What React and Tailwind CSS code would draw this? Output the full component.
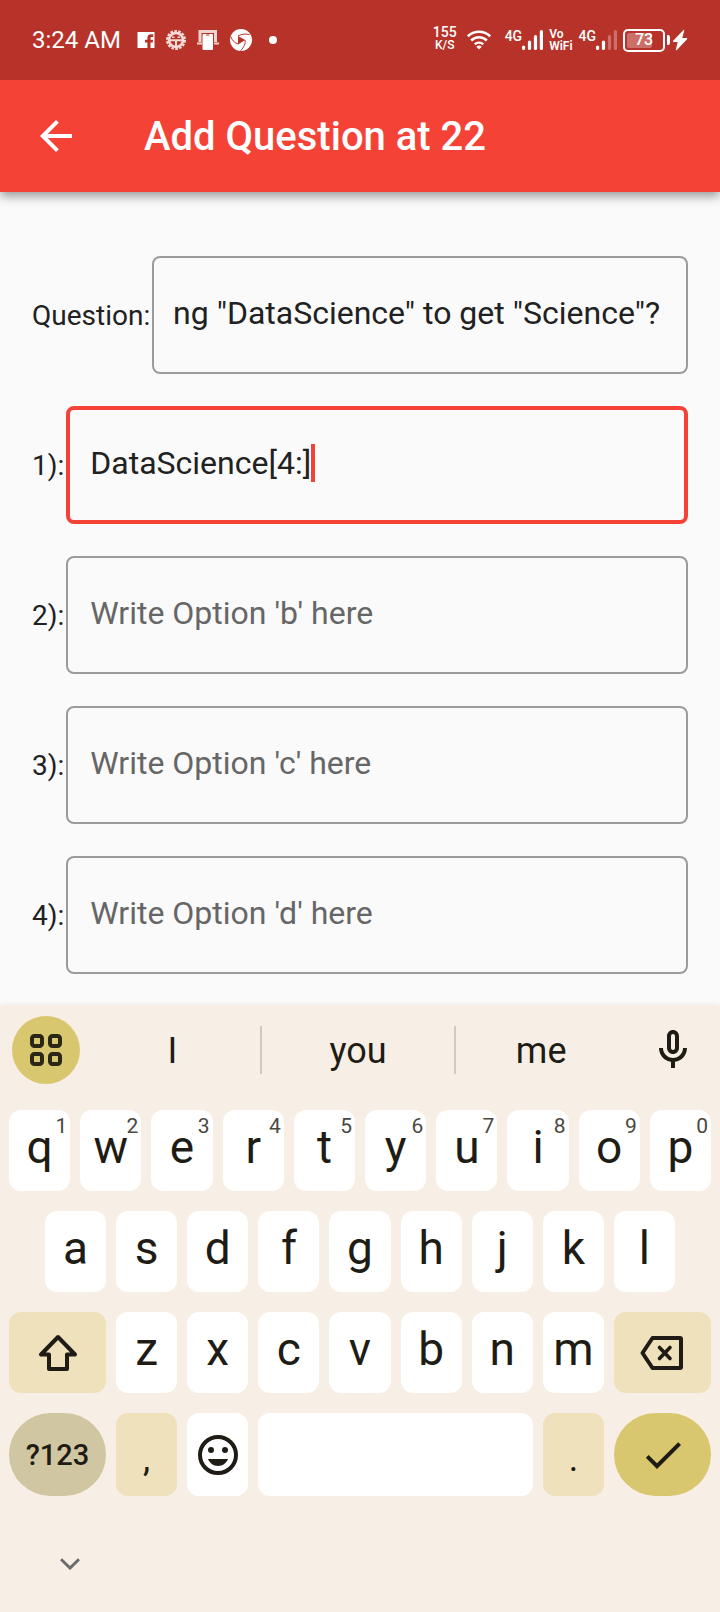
import React from "react";

const OPTIONS = [
  { id: "option-b", label: "2):", placeholder: "Write Option 'b' here" },
  { id: "option-c", label: "3):", placeholder: "Write Option 'c' here" },
  { id: "option-d", label: "4):", placeholder: "Write Option 'd' here" },
];

const TOP_ROW = ["q", "w", "e", "r", "t", "y", "u", "i", "o", "p"];
const HINTS = ["1", "2", "3", "4", "5", "6", "7", "8", "9", "0"];
const HOME_ROW = ["a", "s", "d", "f", "g", "h", "j", "k", "l"];
const LOWER_ROW = ["z", "x", "c", "v", "b", "n", "m"];

function FacebookIcon() {
  return (
    <svg viewBox="0 0 18 16" className="h-4 w-[18px]" fill="#fff" aria-hidden="true">
      <path
        fillRule="evenodd"
        d="M.5 0h17v16h-4v-5.500h2.200l.4-2.700h-2.600V6.200c0-.8.4-1.300 1.400-1.300h1.300V2.300h-2.200c-2.300 0-3.600 1.200-3.600 3.400v2.100H8v2.700h2.400V16H.5z"
      />
    </svg>
  );
}

function GearIcon() {
  return (
    <svg viewBox="0 0 20 20" className="size-5" fill="none" stroke="#f6dcd9" aria-hidden="true">
      <circle cx="10" cy="10" r="7" strokeWidth="2.600" />
      <circle cx="10" cy="10" r="8.900" strokeWidth="2.200" strokeDasharray="2.660 1.334" />
      <path d="M3.500 10.300h13M10 10.300v6.500" strokeWidth="2" />
      <path d="M6 7.200h2.500M11.500 7.200H14" strokeWidth="1.500" />
    </svg>
  );
}

function PhoneIcon() {
  return (
    <svg viewBox="0 0 22 22" className="size-[22px]" aria-hidden="true">
      <path d="M3 13V2.500h15.500V13" fill="none" stroke="#f3d3d0" strokeWidth="3" />
      <path d="M0 14.500h5M17 14.500h5" stroke="#f3d3d0" strokeWidth="2" />
      <rect x="5.500" y="5" width="10.500" height="16" rx="1" fill="#fff" />
      <path d="M9 6h3.500" stroke="#b73229" strokeWidth="1" />
    </svg>
  );
}

function ShutterIcon() {
  return (
    <svg viewBox="0 0 22 22" className="size-[22px]" aria-hidden="true">
      <circle cx="11" cy="11" r="11" fill="#fff" />
      <path d="M8 7 15.200 11 8 15.500z" fill="#b73229" />
      <g fill="none" stroke="#b73229" strokeWidth="1">
        <path d="M8 7C11 5.200 15 4.600 19.500 5.500" />
        <path d="M15 11c.8 3.500-1 7-4.500 10.800" />
        <path d="M8 15C5 14 2 11.500.8 7.500" />
      </g>
    </svg>
  );
}

function WifiIcon() {
  return (
    <svg viewBox="0 0 24 20" className="h-5 w-6" fill="none" stroke="#fff" aria-hidden="true">
      <path d="M.8 6.300a16 16 0 0 1 22.400 0" strokeWidth="2.600" />
      <path d="M4.200 10.500a11 11 0 0 1 15.600 0" strokeWidth="2.600" />
      <path d="M7.800 14.300a6 6 0 0 1 8.400 0" strokeWidth="2.400" />
      <path d="M9.300 16.800a4 4 0 0 1 5.400 0L12 19.600z" fill="#fff" stroke="none" />
    </svg>
  );
}

function Signal({ strong }) {
  const faded = strong ? 1 : 0.3;
  return (
    <div className="flex items-start">
      <span className="text-[14px] leading-[14px] font-medium">4G</span>
      <svg viewBox="0 0 21 22" className="h-[22px] w-[21px]" stroke="#fff" strokeWidth="3.200" strokeLinecap="round" aria-hidden="true">
        <path d="M1.600 18v1.500M7.500 13v6.500" />
        <path d="M13.500 7.500v12M19.400 2.500v17" opacity={faded} />
      </svg>
    </div>
  );
}

function StatusBar() {
  return (
    <div className="relative z-10 flex h-20 items-center justify-between bg-[#b73229] px-8 text-white">
      <div className="flex items-center gap-[11px]">
        <span className="mr-[5px] text-[24px] leading-8">3:24 AM</span>
        <FacebookIcon />
        <GearIcon />
        <PhoneIcon />
        <ShutterIcon />
        <span className="ml-1.5 size-2 rounded-full bg-white" />
      </div>
      <div className="flex items-center gap-1.5">
        <div className="flex flex-col items-center pb-1 font-medium">
          <span className="text-[14px] leading-[14px]">155</span>
          <span className="text-[12px] leading-3">K/S</span>
        </div>
        <div className="mr-2 ml-1">
          <WifiIcon />
        </div>
        <Signal strong />
        <div className="flex flex-col text-[12px] leading-3 font-semibold">
          <span>Vo</span>
          <span>WiFi</span>
        </div>
        <Signal />
        <div className="flex items-center gap-0.5">
          <div className="relative flex h-[23px] w-[42px] items-center justify-center rounded-[5px] border-2 border-white">
            <span className="absolute inset-y-0.5 left-0.5 w-[25px] rounded-[2px] bg-white/30" />
            <span className="relative text-[16px] leading-4 font-medium">73</span>
          </div>
          <span className="h-2.5 w-[3px] rounded-r-[2px] bg-white" />
          <svg viewBox="0 0 16 22" className="h-[22px] w-4" fill="#fff" aria-hidden="true">
            <path d="M11.500 1 1.200 11.800c-.5.600-.2 1.200.5 1.200h4L3.900 20.500c-.2.800.5 1 1 .5L15 10.200c.5-.6.200-1.200-.5-1.200h-4.300l2-7.200c.2-.8-.3-1.200-.7-.8z" />
          </svg>
        </div>
      </div>
    </div>
  );
}

function Key({ hint, children, label, className = "min-w-0 flex-1 rounded-xl bg-white" }) {
  return (
    <button type="button" aria-label={label} className={"relative flex h-full items-center justify-center " + className}>
      {children}
      {hint && <span className="absolute top-1.5 right-[3px] text-[21px] leading-5 text-[#4a4841]">{hint}</span>}
    </button>
  );
}

function Letter({ children }) {
  return <span className="pb-2 text-[46px] leading-none">{children}</span>;
}

function Keyboard() {
  return (
    <section
      aria-label="Keyboard"
      className="flex flex-1 flex-col bg-[#f7efe5] text-[#1e1c14] shadow-[0_0_6px_rgba(0,0,0,0.08)]"
    >
      <div className="flex h-[90px] items-center pl-3">
        <button type="button" aria-label="Keyboard menu" className="flex size-[68px] items-center justify-center rounded-full bg-[#d9c76f]">
          <svg viewBox="0 0 32 32" className="size-8" fill="none" stroke="#2a2716" strokeWidth="4" aria-hidden="true">
            <rect x="2" y="2" width="10" height="10" rx="2.500" />
            <rect x="20" y="2" width="10" height="10" rx="2.500" />
            <rect x="2" y="20" width="10" height="10" rx="2.500" />
            <rect x="20" y="20" width="10" height="10" rx="2.500" />
          </svg>
        </button>
        <div className="ml-[5px] grid h-12 flex-1 grid-cols-[177fr_195fr_170fr] text-[36px] leading-[46px]">
          <button type="button" className="border-r-2 border-[#d0c9bf] pt-0.5">I</button>
          <button type="button" className="border-r-2 border-[#d0c9bf] pt-0.5">you</button>
          <button type="button" className="pt-0.5">me</button>
        </div>
        <button type="button" aria-label="Voice input" className="flex w-[94px] justify-center">
          <svg viewBox="0 0 24 24" className="size-12" fill="currentColor" aria-hidden="true">
            <path d="M12 14c1.660 0 3-1.340 3-3V5c0-1.660-1.340-3-3-3S9 3.340 9 5v6c0 1.660 1.340 3 3 3zm-1-9c0-.55.45-1 1-1s1 .45 1 1v6c0 .55-.45 1-1 1s-1-.45-1-1V5zm6 6c0 2.760-2.240 5-5 5s-5-2.240-5-5H5c0 3.530 2.610 6.430 6 6.920V21h2v-3.080c3.390-.49 6-3.390 6-6.920h-2z" />
          </svg>
        </button>
      </div>

      <div className="flex flex-col gap-5 px-[9px] pt-[15px]">
        <div className="flex h-[81px] gap-2.5">
          {TOP_ROW.map((k, i) => (
            <Key key={k} hint={HINTS[i]}>
              <Letter>{k}</Letter>
            </Key>
          ))}
        </div>
        <div className="flex h-[81px] gap-2.5 px-9">
          {HOME_ROW.map((k) => (
            <Key key={k}>
              <Letter>{k}</Letter>
            </Key>
          ))}
        </div>
        <div className="flex h-[81px] gap-2.5">
          <Key label="Shift" className="w-[97px] rounded-xl bg-[#eee1bc]">
            <svg viewBox="0 0 40 40" className="size-10" fill="none" stroke="currentColor" strokeWidth="4" strokeLinejoin="round" aria-hidden="true">
              <path d="M20 4 3 21.500h8V36h18V21.500h8z" />
            </svg>
          </Key>
          {LOWER_ROW.map((k) => (
            <Key key={k}>
              <Letter>{k}</Letter>
            </Key>
          ))}
          <Key label="Backspace" className="w-[97px] rounded-xl bg-[#eee1bc]">
            <svg viewBox="0 0 44 36" className="h-9 w-11" fill="none" stroke="currentColor" strokeWidth="4" strokeLinejoin="round" strokeLinecap="round" aria-hidden="true">
              <path d="M12.500 3H40q1 0 1 1v28q0 1-1 1H12.500L2.500 18z" />
              <path d="m19.500 12.500 10.500 11m0-11-10.500 11" strokeWidth="3.600" />
            </svg>
          </Key>
        </div>
        <div className="flex h-[83px] gap-2.5">
          <Key className="w-[97px] rounded-full bg-[#d1c6a2]">
            <span className="text-[29px] leading-10 font-medium">?123</span>
          </Key>
          <Key className="w-[61px] rounded-xl bg-[#eee1bc]">
            <span className="pt-2 text-[36px] leading-10">,</span>
          </Key>
          <Key label="Emoji" className="w-[61px] rounded-xl bg-white">
            <svg viewBox="0 0 24 24" className="size-12" fill="currentColor" aria-hidden="true">
              <circle cx="12" cy="12" r="9" fill="none" stroke="currentColor" strokeWidth="2" />
              <circle cx="8.500" cy="9.500" r="1.500" />
              <circle cx="15.500" cy="9.500" r="1.500" />
              <path d="M7 14h10c-.8 2.100-2.700 3.500-5 3.500S7.800 16.100 7 14z" />
            </svg>
          </Key>
          <Key label="Space" />
          <Key className="w-[61px] rounded-xl bg-[#eee1bc]">
            <span className="pt-2 text-[36px] leading-10">.</span>
          </Key>
          <Key label="Done" className="w-[97px] rounded-full bg-[#d9c76f]">
            <svg viewBox="0 0 24 24" className="size-12" fill="currentColor" aria-hidden="true">
              <path d="M9 16.170 4.830 12l-1.420 1.410L9 19 21 7l-1.410-1.410z" />
            </svg>
          </Key>
        </div>
      </div>

      <div className="flex px-[54px] pt-[52px] pb-8">
        <button type="button" aria-label="Hide keyboard" className="flex size-8 items-center justify-center">
          <svg viewBox="0 0 20 12" className="h-3 w-5" fill="none" stroke="#6a6c6e" strokeWidth="3" aria-hidden="true">
            <path d="m1 1.200 9 8.800 9-8.800" />
          </svg>
        </button>
      </div>
    </section>
  );
}

export default function App() {
  return (
    <div className="flex min-h-screen flex-col bg-[#fafafa] font-['Roboto',sans-serif] text-[#212121]">
      <StatusBar />
      <header className="flex h-28 items-center gap-16 bg-[#f44336] px-8 text-white shadow-[0_4px_10px_rgba(0,0,0,0.4)]">
        <button type="button" aria-label="Back">
          <svg viewBox="0 0 24 24" className="size-12" fill="currentColor" aria-hidden="true">
            <path d="M20 11H7.830l5.590-5.590L12 4l-8 8 8 8 1.410-1.410L7.830 13H20v-2z" />
          </svg>
        </button>
        <h1 className="pt-0.5 text-[40px] leading-[48px] font-medium">Add Question at 22</h1>
      </header>

      <form className="flex flex-col gap-8 px-8 pt-16 pb-[31px] text-[28px]">
        <div className="flex items-center gap-0.5">
          <label htmlFor="question" className="pt-0.5">Question:</label>
          <input
            id="question"
            type="text"
            defaultValue={'ng "DataScience" to get "Science"?'}
            className="h-[118px] min-w-0 flex-1 rounded-lg border-2 border-[#9b9b9b] pr-[26px] pb-1 text-right text-[32px] outline-none"
          />
        </div>
        <div className="flex items-center gap-0.5">
          <label htmlFor="option-a" className="pt-0.5">1):</label>
          <div className="flex h-[118px] min-w-0 flex-1 items-center rounded-lg border-4 border-[#f44336] px-5 pb-1">
            <input
              id="option-a"
              type="text"
              defaultValue="DataScience[4:]"
              className="field-sizing-content max-w-full text-[32px] outline-none"
            />
            <span className="h-[38px] w-1 bg-[#f44336]" />
          </div>
        </div>
        {OPTIONS.map((o) => (
          <div key={o.id} className="flex items-center gap-0.5">
            <label htmlFor={o.id} className="pt-0.5">{o.label}</label>
            <input
              id={o.id}
              type="text"
              placeholder={o.placeholder}
              className="h-[118px] min-w-0 flex-1 rounded-lg border-2 border-[#9b9b9b] px-[22px] pb-1 text-[32px] outline-none placeholder:text-[#666666]"
            />
          </div>
        ))}
      </form>

      <Keyboard />
    </div>
  );
}
